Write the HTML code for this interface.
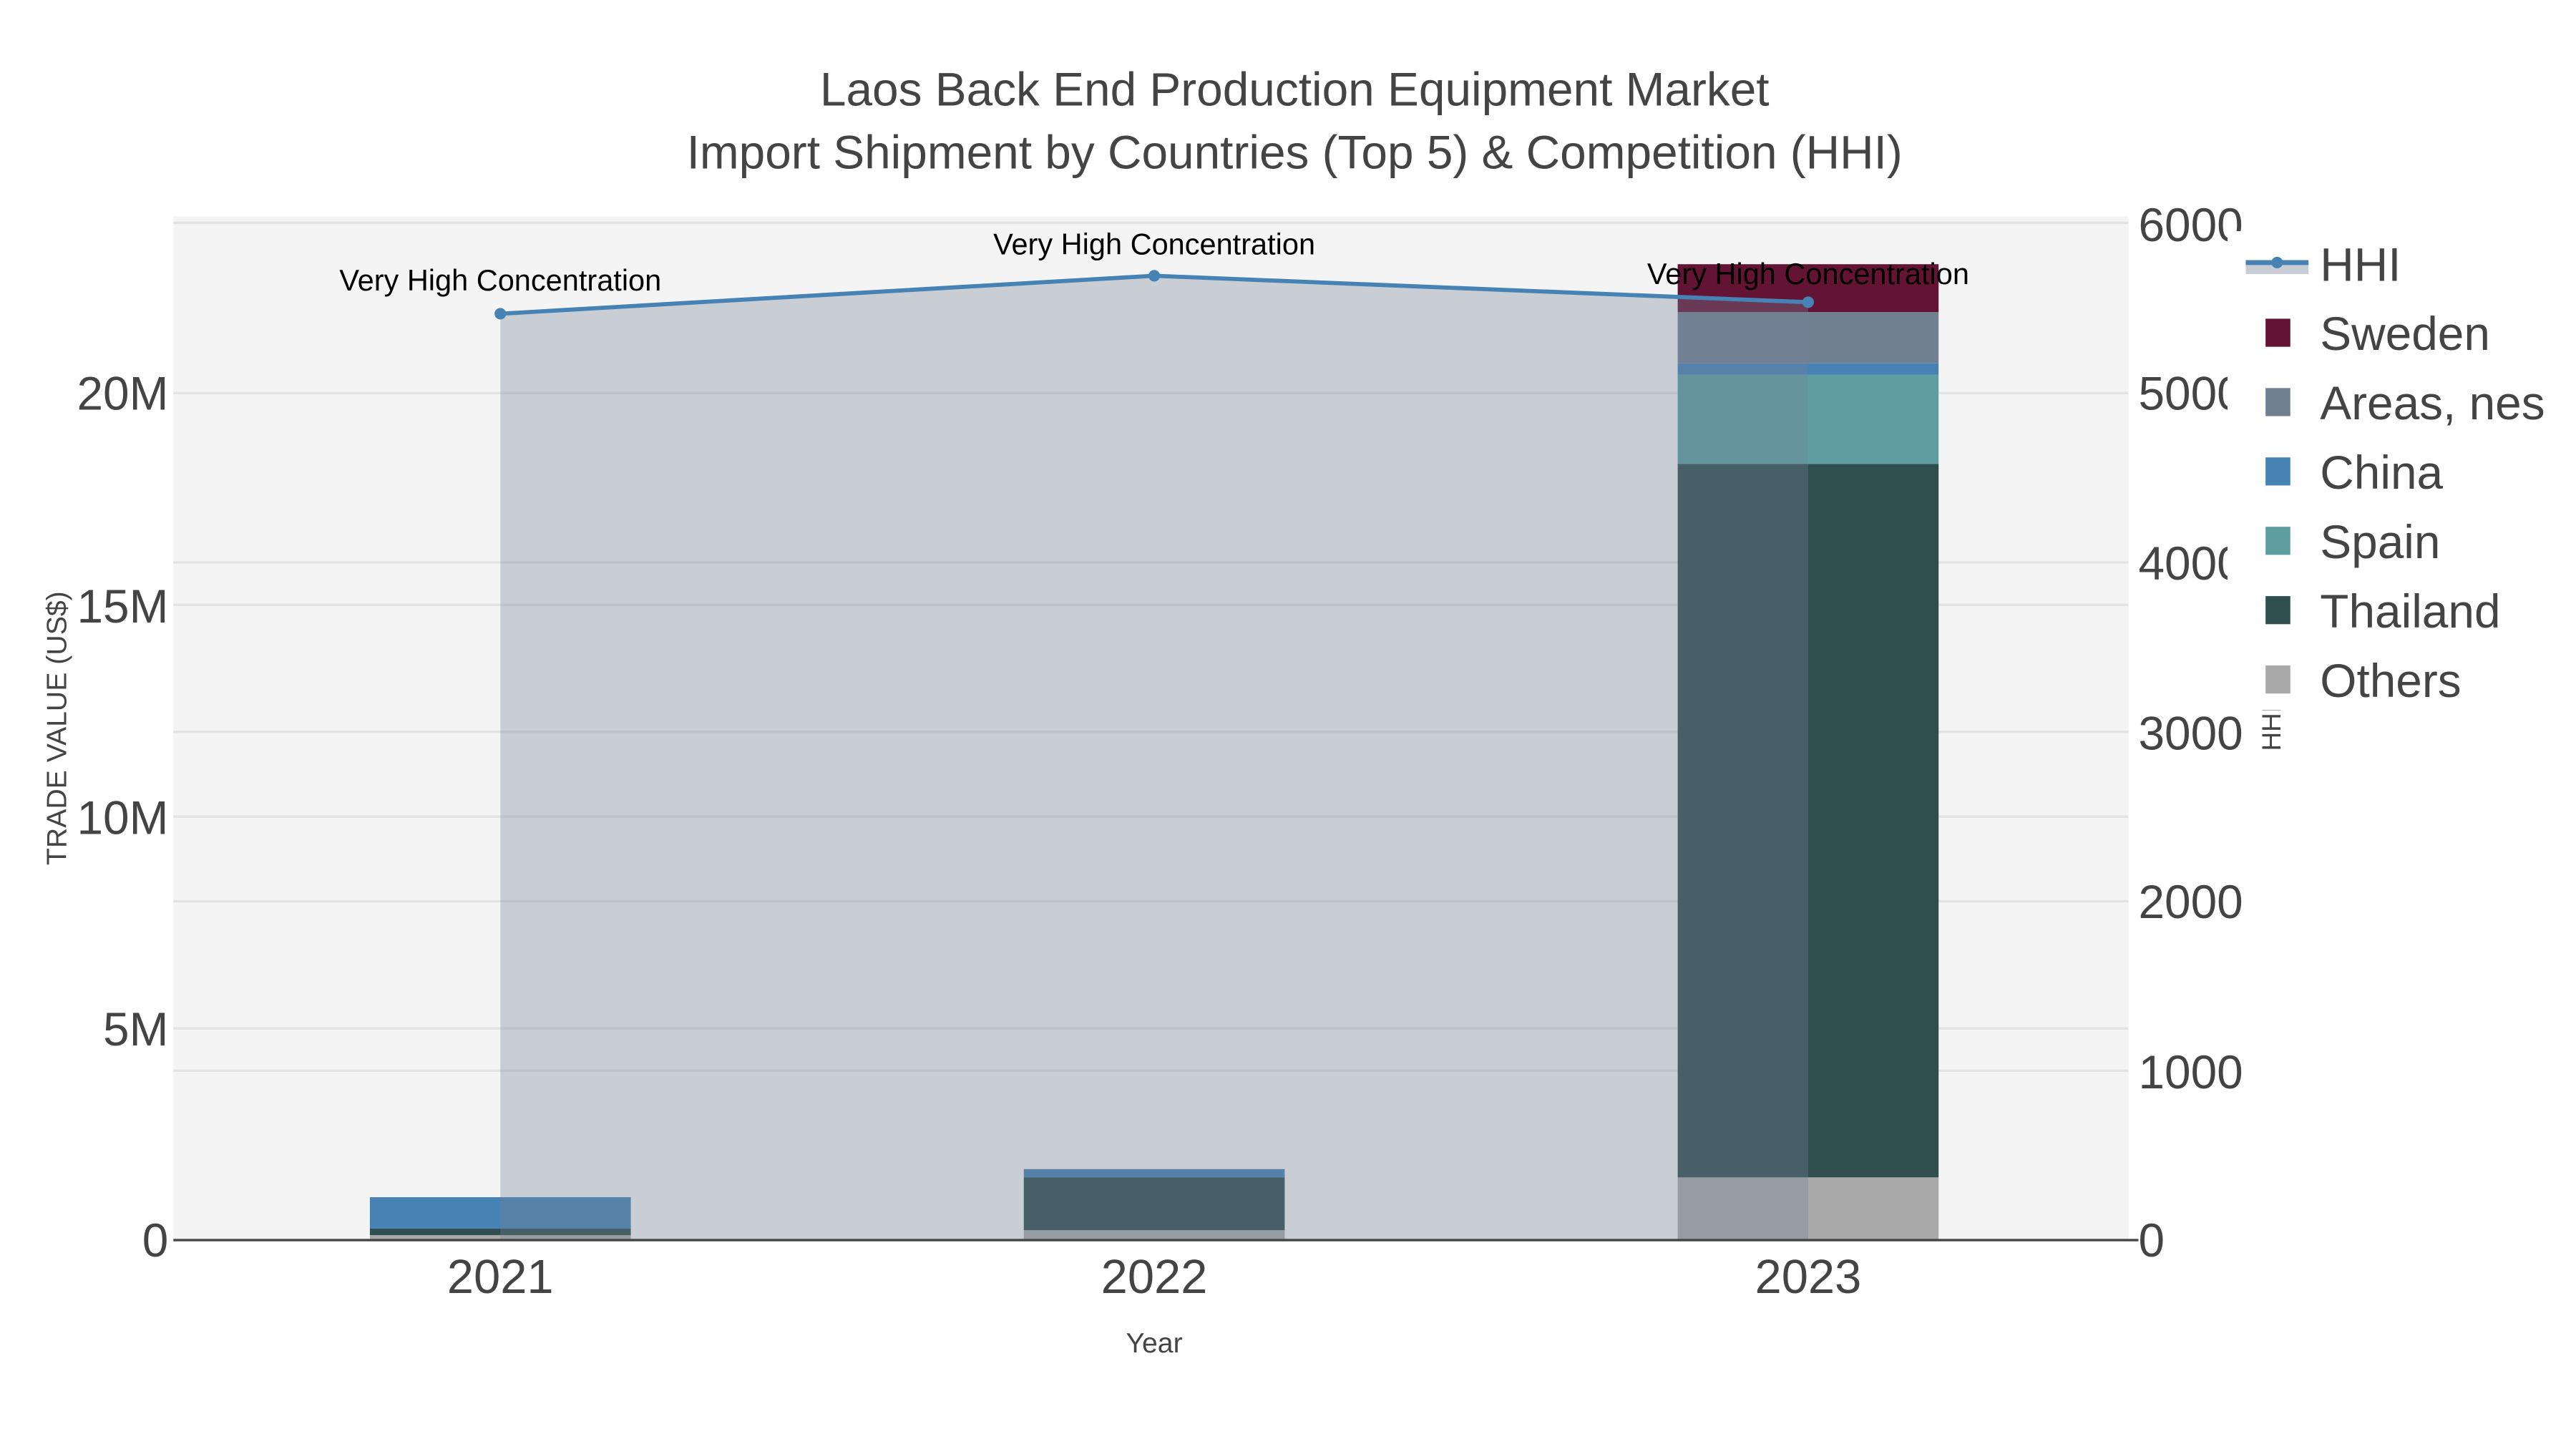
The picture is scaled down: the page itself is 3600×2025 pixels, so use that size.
<!DOCTYPE html>
<html><head><meta charset="utf-8"><style>html,body{margin:0;padding:0;background:#fff}svg{display:block}</style></head>
<body>
<svg width="3600" height="2025" viewBox="0 0 1560 877.5" xmlns="http://www.w3.org/2000/svg" font-family="Liberation Sans, Arial, sans-serif">
<rect width="1560" height="877.5" fill="#fff"/>
<rect x="105" y="131" width="1184" height="620" fill="#f4f4f4"/>
<g stroke="#e3e3e3" stroke-width="1.5">
<line x1="105" x2="1289" y1="622.75" y2="622.75"/><line x1="105" x2="1289" y1="494.5" y2="494.5"/>
<line x1="105" x2="1289" y1="366.25" y2="366.25"/><line x1="105" x2="1289" y1="238" y2="238"/>
<line x1="105" x2="1289" y1="648.4" y2="648.4"/><line x1="105" x2="1289" y1="545.8" y2="545.8"/>
<line x1="105" x2="1289" y1="443.2" y2="443.2"/><line x1="105" x2="1289" y1="340.6" y2="340.6"/>
<line x1="105" x2="1289" y1="135" y2="135"/>
</g>
<g>
<rect x="224" y="748" width="158" height="3" fill="#a9a9a9"/>
<rect x="224" y="744" width="158" height="4" fill="#2f4f4f"/>
<rect x="224" y="725" width="158" height="19" fill="#4682b4"/>
<rect x="620" y="745" width="158" height="6" fill="#a9a9a9"/>
<rect x="620" y="713" width="158" height="32" fill="#2f4f4f"/>
<rect x="620" y="708" width="158" height="5" fill="#4682b4"/>
<rect x="1016" y="713" width="158" height="38" fill="#a9a9a9"/>
<rect x="1016" y="281" width="158" height="432" fill="#2f4f4f"/>
<rect x="1016" y="227" width="158" height="54" fill="#5f9ea0"/>
<rect x="1016" y="220" width="158" height="7" fill="#4682b4"/>
<rect x="1016" y="189" width="158" height="31" fill="#708090"/>
<rect x="1016" y="160" width="158" height="29" fill="#631435"/>
</g>
<polygon points="303,190 699,167 1095,183 1095,751 303,751" fill="rgb(118,128,150)" fill-opacity="0.34"/>
<polyline points="303,190 699,167 1095,183" fill="none" stroke="#4682b4" stroke-width="2.5"/>
<circle cx="303" cy="190" r="3.5" fill="#4682b4"/><circle cx="699" cy="167" r="3.5" fill="#4682b4"/><circle cx="1095" cy="183" r="3.5" fill="#4682b4"/>
<line x1="105" x2="1295" y1="751" y2="751" stroke="#444" stroke-width="1.5"/>
<g font-size="18" fill="#000" text-anchor="middle">
<text x="303" y="176">Very High Concentration</text>
<text x="699" y="154">Very High Concentration</text>
<text x="1095" y="172">Very High Concentration</text>
</g>
<g font-size="28.5" fill="#444">
<text x="784" y="64" text-anchor="middle">Laos Back End Production Equipment Market</text>
<text x="784" y="102" text-anchor="middle">Import Shipment by Countries (Top 5) &amp; Competition (HHI)</text>
<g text-anchor="end">
<text x="102" y="761">0</text><text x="102" y="633">5M</text><text x="102" y="505">10M</text><text x="102" y="377">15M</text><text x="102" y="248">20M</text>
</g>
<g text-anchor="start">
<text x="1295" y="761">0</text><text x="1295" y="659">1000</text><text x="1295" y="556">2000</text><text x="1295" y="454">3000</text><text x="1295" y="351">4000</text><text x="1295" y="248">5000</text><text x="1295" y="146">6000</text>
</g>
<g text-anchor="middle" font-size="29"><text x="303" y="783">2021</text><text x="699" y="783">2022</text><text x="1095" y="783">2023</text></g>
</g>
<text x="699" y="819" font-size="17" fill="#444" text-anchor="middle">Year</text>
<text transform="translate(40,441) rotate(-90)" font-size="17" fill="#444" text-anchor="middle">TRADE VALUE (US$)</text>
<text transform="translate(1381,441) rotate(-90)" font-size="16" fill="#444" text-anchor="middle">HHI</text>
<rect x="1349" y="140" width="211" height="290" fill="#fff"/>
<rect x="1360" y="159" width="38" height="7" fill="#c8cdd5"/>
<line x1="1360" x2="1398" y1="159" y2="159" stroke="#4682b4" stroke-width="3"/>
<circle cx="1379" cy="159" r="3.5" fill="#4682b4"/>
<rect x="1372" y="193" width="15" height="17" fill="#631435"/>
<rect x="1372" y="235" width="15" height="17" fill="#708090"/>
<rect x="1372" y="277" width="15" height="17" fill="#4682b4"/>
<rect x="1372" y="319" width="15" height="17" fill="#5f9ea0"/>
<rect x="1372" y="361" width="15" height="17" fill="#2f4f4f"/>
<rect x="1372" y="403" width="15" height="17" fill="#a9a9a9"/>
<g font-size="28.5" fill="#444">
<text x="1405" y="170">HHI</text><text x="1405" y="212">Sweden</text><text x="1405" y="254">Areas, nes</text><text x="1405" y="296">China</text><text x="1405" y="338">Spain</text><text x="1405" y="380">Thailand</text><text x="1405" y="422">Others</text>
</g>
</svg>
</body></html>
